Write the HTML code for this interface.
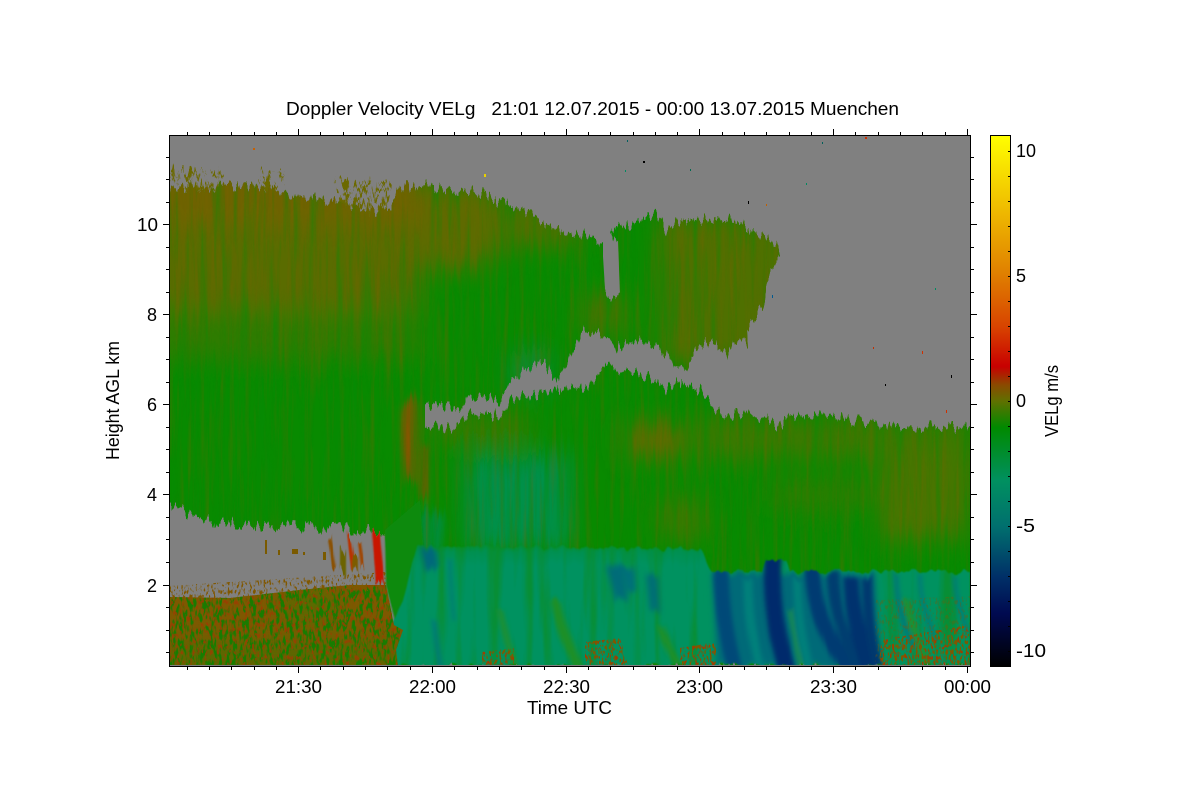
<!DOCTYPE html>
<html><head><meta charset="utf-8"><style>
html,body{margin:0;padding:0;background:#fff;width:1200px;height:800px;overflow:hidden}
svg{display:block}
text{font-family:"Liberation Sans",sans-serif;fill:#000}
</style></head><body>
<svg width="1200" height="800" viewBox="0 0 1200 800" xmlns="http://www.w3.org/2000/svg">
<defs>
<linearGradient id="cb" x1="0" y1="135" x2="0" y2="667" gradientUnits="userSpaceOnUse">
<stop offset="0" stop-color="#ffff00"/>
<stop offset=".13" stop-color="#f0c000"/>
<stop offset=".26" stop-color="#e08000"/>
<stop offset=".36" stop-color="#d84400"/>
<stop offset=".435" stop-color="#c80000"/>
<stop offset=".47" stop-color="#8a4a00"/>
<stop offset=".5" stop-color="#607000"/>
<stop offset=".55" stop-color="#008a00"/>
<stop offset=".65" stop-color="#009060"/>
<stop offset=".735" stop-color="#00706e"/>
<stop offset=".83" stop-color="#003068"/>
<stop offset=".9" stop-color="#000a50"/>
<stop offset="1" stop-color="#000000"/>
</linearGradient>
<linearGradient id="tealTop" x1="0" y1="540" x2="0" y2="566" gradientUnits="userSpaceOnUse">
<stop offset="0" stop-color="#0a8a10"/><stop offset=".45" stop-color="#009050"/><stop offset="1" stop-color="#009260"/>
</linearGradient>
<clipPath id="plot"><rect x="170" y="136" width="800" height="529"/></clipPath>
<clipPath id="cloud">
<polygon points="169,187 230,186 287,192 303,197 340,203 377,213 393,203 400,187 420,185 480,192 500,203 533,213 543,223 573,237 583,234 603,243 603,263 605,295 620,297 618,247 610,230 637,222 657,213 667,232 673,225 683,220 733,220 777,242 780,253 770,272 763,307 747,327 748,343 733,340 727,358 717,343 700,343 687,370 675,373 667,353 640,340 617,347 600,333 582,332 570,357 557,385 545,363 520,373 510,382 500,400 467,397 462,410 453,405 425,405 425,430 420,480 405,530 380,530 320,528 260,525 200,520 169,503"/>
<polygon points="425,427 453,427 467,415 507,415 510,400 553,390 590,387 600,367 640,372 667,390 677,383 700,390 717,413 767,417 778,427 797,413 850,420 900,426 970,428 970,666 395,666 400,640 388,585 385,530 420,470"/>
</clipPath>
<filter id="b12" x="-20%" y="-20%" width="140%" height="140%"><feGaussianBlur stdDeviation="12"/></filter>
<filter id="b5" x="-30%" y="-30%" width="160%" height="160%"><feGaussianBlur stdDeviation="4"/></filter>
<filter id="b3" x="-30%" y="-10%" width="160%" height="120%"><feGaussianBlur stdDeviation="3"/></filter>
<filter id="b2" x="-30%" y="-10%" width="160%" height="120%"><feGaussianBlur stdDeviation="2.2"/></filter>
<filter id="b1" x="-30%" y="-10%" width="160%" height="120%"><feGaussianBlur stdDeviation=".8"/></filter>
<filter id="disp" filterUnits="userSpaceOnUse" x="140" y="120" width="860" height="560" color-interpolation-filters="sRGB">
<feTurbulence type="fractalNoise" baseFrequency="0.28 0.018" numOctaves="3" seed="4" result="n"/>
<feColorMatrix in="n" type="matrix" values="0 0 0 0 .5  0 2 0 0 -.5  0 0 0 0 0  0 0 0 0 1" result="m"/>
<feDisplacementMap in="SourceGraphic" in2="m" scale="13" xChannelSelector="R" yChannelSelector="G"/>
</filter>
<filter id="tb" filterUnits="userSpaceOnUse" x="380" y="530" width="600" height="150" color-interpolation-filters="sRGB">
<feTurbulence type="fractalNoise" baseFrequency="0.12 0.02" numOctaves="2" seed="11" result="n"/>
<feColorMatrix in="n" type="matrix" values="0 0 0 0 .5  0 2 0 0 -.5  0 0 0 0 0  0 0 0 0 1" result="m"/>
<feDisplacementMap in="SourceGraphic" in2="m" scale="6" xChannelSelector="R" yChannelSelector="G" result="d"/>
<feGaussianBlur in="d" stdDeviation=".9"/>
</filter>
<filter id="streakBrown" filterUnits="userSpaceOnUse" x="169" y="135" width="801" height="531" color-interpolation-filters="sRGB">
<feTurbulence type="fractalNoise" baseFrequency="0.2 0.01" numOctaves="3" seed="9"/>
<feColorMatrix type="matrix" values="0 0 0 0 .5  0 0 0 0 .38  0 0 0 0 0  2.4 0 0 0 -1.1"/>
</filter>
<filter id="streakGreen" filterUnits="userSpaceOnUse" x="169" y="135" width="801" height="531" color-interpolation-filters="sRGB">
<feTurbulence type="fractalNoise" baseFrequency="0.14 0.008" numOctaves="3" seed="21"/>
<feColorMatrix type="matrix" values="0 0 0 0 .02  0 0 0 0 .55  0 0 0 0 .02  0 2.4 0 0 -1.1"/>
</filter>
<filter id="streakTeal" filterUnits="userSpaceOnUse" x="169" y="135" width="801" height="531" color-interpolation-filters="sRGB">
<feTurbulence type="fractalNoise" baseFrequency="0.09 0.006" numOctaves="3" seed="33"/>
<feColorMatrix type="matrix" values="0 0 0 0 .05  0 0 0 0 .55  0 0 0 0 .1  0 3 0 0 -1.45"/>
</filter>
<filter id="speck" filterUnits="userSpaceOnUse" x="169" y="540" width="801" height="126" color-interpolation-filters="sRGB">
<feTurbulence type="fractalNoise" baseFrequency="0.3 0.1" numOctaves="2" seed="7"/>
<feColorMatrix type="matrix" values="0 0 0 0 .06  0 0 0 0 .5  0 0 0 0 0  7 0 0 0 -3.3"/>
</filter>
<filter id="speckR2" filterUnits="userSpaceOnUse" x="169" y="540" width="801" height="126" color-interpolation-filters="sRGB">
<feTurbulence type="fractalNoise" baseFrequency="0.4 0.18" numOctaves="2" seed="27"/>
<feColorMatrix type="matrix" values="0 0 0 0 .62  0 0 0 0 .24  0 0 0 0 0  9 0 0 0 -5.2"/>
</filter>
<filter id="speckB" filterUnits="userSpaceOnUse" x="169" y="540" width="801" height="126" color-interpolation-filters="sRGB">
<feTurbulence type="fractalNoise" baseFrequency="0.5 0.2" numOctaves="2" seed="13"/>
<feColorMatrix type="matrix" values="0 0 0 0 .5  0 0 0 0 .34  0 0 0 0 0  9 0 0 0 -4.9"/>
</filter>
<filter id="speckO" filterUnits="userSpaceOnUse" x="169" y="160" width="300" height="60" color-interpolation-filters="sRGB">
<feTurbulence type="fractalNoise" baseFrequency="0.14 0.16" numOctaves="2" seed="3"/>
<feColorMatrix type="matrix" values="0 0 0 0 .42  0 0 0 0 .41  0 0 0 0 0  14 0 0 0 -7.2"/>
</filter>
<clipPath id="speckL"><polygon points="169,597 230,598 300,590 350,585 386,585 394,625 403,630 396,650 398,666 169,666"/></clipPath>
<clipPath id="sparseGray"><polygon points="169,586 260,580 387,572 387,590 300,594 230,602 169,600"/></clipPath>
<clipPath id="sparseTop"><polygon points="169,170 224,172 224,190 169,192"/><polygon points="258,172 285,174 285,192 258,192"/><polygon points="333,180 392,182 385,214 340,205"/></clipPath>
<clipPath id="speckR"><polygon points="880,640 970,625 970,666 880,666"/><polygon points="585,642 620,638 628,666 585,666"/><polygon points="680,648 716,642 716,666 680,666"/><polygon points="482,652 514,648 514,666 482,666"/></clipPath>
<clipPath id="speckG"><polygon points="875,600 970,596 970,666 875,666"/></clipPath>
<clipPath id="tealC"><polygon points="417,546 700,549 708,566 712,572 762,572 766,560 786,560 790,572 970,572 970,666 395,666 395,645 392,627 403,600"/></clipPath>
</defs>

<rect x="169" y="135" width="801" height="531" fill="#808080"/>

<g clip-path="url(#plot)">
<g filter="url(#disp)">
<rect x="169" y="160" width="300" height="60" filter="url(#speckO)" clip-path="url(#sparseTop)"/>
<g clip-path="url(#cloud)">
<rect x="169" y="135" width="801" height="531" fill="#088a00"/>
<g filter="url(#b12)">
<rect x="150" y="150" width="270" height="85" fill="#6e6400"/>
<rect x="150" y="225" width="270" height="85" fill="#5a6c00"/>
<rect x="150" y="310" width="270" height="50" fill="#2e7c00"/>
<rect x="420" y="185" width="70" height="85" fill="#5f6a00"/>
<rect x="490" y="200" width="90" height="50" fill="#4a7200"/>
<rect x="660" y="215" width="130" height="150" fill="#506f00"/>
<rect x="583" y="295" width="40" height="40" fill="#4a7200"/>
<rect x="430" y="418" width="100" height="22" fill="#3e7800"/>
<rect x="700" y="418" width="270" height="40" fill="#3e7800"/>
<rect x="880" y="450" width="90" height="90" fill="#4a7400"/>
<rect x="625" y="425" width="60" height="30" fill="#6c6800"/>
<rect x="660" y="500" width="45" height="40" fill="#3c7800"/>
<rect x="770" y="480" width="100" height="30" fill="#2a7e00"/>
<rect x="465" y="455" width="105" height="95" fill="#009048"/>
<rect x="510" y="350" width="40" height="40" fill="#0a8a30"/>
</g>
<g filter="url(#b5)">
<path d="M403 405 C400 440 403 470 408 482 L414 482 C418 450 416 425 417 395Z" fill="#8a5200"/>
<path d="M423 445 L428 445 L428 498 L421 498Z" fill="#865000"/>
<path d="M405 520 L425 505 L445 520 L440 560 L400 560Z" fill="#008c3a"/>
</g>
<rect x="169" y="135" width="801" height="531" filter="url(#streakBrown)" opacity=".32"/>
<rect x="169" y="135" width="801" height="531" filter="url(#streakGreen)" opacity=".5"/>
</g>
</g>

<!-- boundary layer -->
<polygon points="386,585 385,530 420,500 425,570 417,666 395,666 400,640" fill="#0a8a10" filter="url(#b1)"/>
<g filter="url(#tb)"><g clip-path="url(#tealC)">
<rect x="390" y="540" width="590" height="130" fill="url(#tealTop)"/>
<rect x="169" y="135" width="801" height="531" filter="url(#streakTeal)" opacity=".6"/>
<g filter="url(#b3)">
<polygon points="712,574 875,574 880,666 717,666" fill="#006a78"/>
<polygon points="606,566 622,566 628,600 616,600" fill="#006c78"/>
<polygon points="622,566 635,566 636,590 628,592" fill="#00707a"/>
<polygon points="646,574 658,574 660,612 650,612" fill="#006e74"/>
<polygon points="420,548 436,548 438,568 426,572" fill="#00687a"/>
</g>
<g filter="url(#b2)" stroke-linecap="butt" fill="none">
<path d="M721 570 C722 610 727 640 735 670" stroke="#004a78" stroke-width="15"/>
<path d="M748 580 C748 620 754 640 760 670" stroke="#00807a" stroke-width="9"/>
<path d="M773 555 C770 600 778 640 787 670" stroke="#002c6c" stroke-width="17"/>
<path d="M797 580 C798 620 803 645 810 670" stroke="#00807a" stroke-width="8"/>
<path d="M812 568 C814 610 828 640 850 670" stroke="#003a72" stroke-width="15"/>
<path d="M833 574 C833 610 846 640 860 670" stroke="#003e70" stroke-width="12"/>
<path d="M851 578 C852 610 859 640 870 670" stroke="#00306e" stroke-width="15"/>
<path d="M867 578 C867 610 871 640 878 670" stroke="#00386e" stroke-width="10"/>
<path d="M896 574 C896 605 905 630 915 650" stroke="#00787a" stroke-width="5"/>
<path d="M920 574 C920 600 928 620 935 640" stroke="#007c7a" stroke-width="4"/>
<path d="M955 574 C955 600 962 615 968 630" stroke="#007c7a" stroke-width="4"/>
<path d="M434 620 C436 640 438 655 441 670" stroke="#007a78" stroke-width="5"/>
<path d="M450 560 C450 580 452 600 454 620" stroke="#007a78" stroke-width="3"/>
<path d="M790 610 C793 630 797 650 802 670" stroke="#209a40" stroke-width="3"/>
<path d="M555 600 C560 625 570 650 580 670" stroke="#1a8f28" stroke-width="10"/>
<path d="M660 625 C665 640 672 655 680 670" stroke="#1a8f28" stroke-width="7"/>
<path d="M500 610 C503 630 510 650 516 670" stroke="#1a8f30" stroke-width="6"/>
<path d="M905 600 C910 620 920 650 930 670" stroke="#1a9030" stroke-width="8"/>
</g>
</g></g>

<!-- lower-left brown layer -->
<polygon points="169,597 230,598 300,590 350,585 386,585 394,625 403,630 396,650 398,666 169,666" fill="#7e5800"/>
<g clip-path="url(#speckL)">
<g filter="url(#b12)">
<rect x="285" y="592" width="50" height="26" fill="#4f7000"/>
<rect x="170" y="645" width="230" height="24" fill="#506c00"/>
</g>
<rect x="169" y="540" width="801" height="126" filter="url(#speck)" opacity=".9"/>
<rect x="169" y="540" width="801" height="126" filter="url(#speckR2)" opacity=".8"/>
</g>
<g clip-path="url(#sparseGray)"><rect x="169" y="540" width="801" height="126" filter="url(#speckB)"/></g>
<g clip-path="url(#speckG)"><rect x="169" y="540" width="801" height="126" filter="url(#speckB)" style="opacity:.35"/></g>
<g clip-path="url(#speckR)"><rect x="169" y="540" width="801" height="126" filter="url(#speckR2)"/><rect x="169" y="540" width="801" height="126" filter="url(#speckB)"/></g>

<!-- red streaks -->
<g filter="url(#disp)"><g filter="url(#b1)">
<path d="M372 530 L380 530 L384 584 L376 586Z" fill="#c81800"/>
<path d="M347 536 L351 536 L356 568 L351 570Z" fill="#b83000"/>
<path d="M358 540 L361 540 L364 570 L361 570Z" fill="#a04400"/>
<path d="M328 540 L331 540 L336 565 L332 565Z" fill="#8a5000"/>
<path d="M340 552 L346 552 L346 572 L340 570Z" fill="#6c6400"/>
<path d="M352 556 L358 556 L358 572 L352 572Z" fill="#7c5c00"/>
</g></g>
<g fill="#7a5a00">
<rect x="265" y="540" width="2" height="14"/><rect x="278" y="550" width="2" height="5"/><rect x="292" y="549" width="6" height="5"/><rect x="303" y="552" width="2" height="3"/><rect x="323" y="552" width="3" height="8"/>
</g>

<!-- specks in gray -->
<g>
<rect x="253" y="148" width="2" height="2" fill="#c86000"/><rect x="484" y="174" width="2" height="3" fill="#e8d000"/>
<rect x="627" y="140" width="1" height="2" fill="#006060"/><rect x="643" y="161" width="2" height="2" fill="#000"/>
<rect x="625" y="170" width="1" height="2" fill="#008a60"/><rect x="690" y="169" width="1" height="2" fill="#006a50"/>
<rect x="748" y="201" width="1" height="3" fill="#000"/><rect x="766" y="204" width="1" height="2" fill="#c06000"/>
<rect x="806" y="183" width="1" height="2" fill="#008a60"/><rect x="822" y="142" width="1" height="2" fill="#00605a"/>
<rect x="865" y="137" width="2" height="2" fill="#d03000"/><rect x="885" y="384" width="1" height="2" fill="#000"/>
<rect x="951" y="375" width="1" height="3" fill="#000"/><rect x="922" y="351" width="1" height="3" fill="#d03000"/>
<rect x="946" y="410" width="1" height="3" fill="#d03000"/><rect x="935" y="288" width="1" height="2" fill="#008a60"/>
<rect x="873" y="347" width="1" height="2" fill="#c03000"/><rect x="772" y="295" width="1" height="3" fill="#005a90"/>
</g>
</g>

<!-- frame -->
<rect x="169.5" y="135.5" width="801" height="531" fill="none" stroke="#000"/>
<path stroke="#000" fill="none" d="
M298.5 135V129M432.5 135V129M566.5 135V129M699.5 135V129M833.5 135V129M967.5 135V129
M298.5 667V673M432.5 667V673M566.5 667V673M699.5 667V673M833.5 667V673M967.5 667V673
M187.5 135V132M209.5 135V132M231.5 135V132M254.5 135V132M276.5 135V132M320.5 135V132M343.5 135V132M365.5 135V132M387.5 135V132M410.5 135V132M454.5 135V132M477.5 135V132M499.5 135V132M521.5 135V132M544.5 135V132M588.5 135V132M610.5 135V132M633.5 135V132M655.5 135V132M677.5 135V132M722.5 135V132M744.5 135V132M766.5 135V132M789.5 135V132M811.5 135V132M855.5 135V132M878.5 135V132M900.5 135V132M922.5 135V132M945.5 135V132
M187.5 667V670M209.5 667V670M231.5 667V670M254.5 667V670M276.5 667V670M320.5 667V670M343.5 667V670M365.5 667V670M387.5 667V670M410.5 667V670M454.5 667V670M477.5 667V670M499.5 667V670M521.5 667V670M544.5 667V670M588.5 667V670M610.5 667V670M633.5 667V670M655.5 667V670M677.5 667V670M722.5 667V670M744.5 667V670M766.5 667V670M789.5 667V670M811.5 667V670M855.5 667V670M878.5 667V670M900.5 667V670M922.5 667V670M945.5 667V670
M169 224.5H163M169 314.5H163M169 404.5H163M169 494.5H163M169 585.5H163
M971 224.5H977M971 314.5H977M971 404.5H977M971 494.5H977M971 585.5H977
M169 157.5H166M169 179.5H166M169 202.5H166M169 247.5H166M169 269.5H166M169 292.5H166M169 337.5H166M169 359.5H166M169 382.5H166M169 427.5H166M169 449.5H166M169 472.5H166M169 517.5H166M169 539.5H166M169 562.5H166M169 607.5H166M169 630.5H166M169 652.5H166
M971 157.5H974M971 179.5H974M971 202.5H974M971 247.5H974M971 269.5H974M971 292.5H974M971 337.5H974M971 359.5H974M971 382.5H974M971 427.5H974M971 449.5H974M971 472.5H974M971 517.5H974M971 539.5H974M971 562.5H974M971 607.5H974M971 630.5H974M971 652.5H974"/>

<!-- colorbar -->
<rect x="990.5" y="135.5" width="20" height="531" fill="url(#cb)" stroke="#000"/>
<path stroke="#000" fill="none" d="M1008 151.5H1010M1008 176.5H1010M1008 201.5H1010M1008 226.5H1010M1008 251.5H1010M1008 276.5H1010M1008 301.5H1010M1008 326.5H1010M1008 351.5H1010M1008 376.5H1010M1008 401.5H1010M1008 426.5H1010M1008 451.5H1010M1008 476.5H1010M1008 501.5H1010M1008 526.5H1010M1008 551.5H1010M1008 576.5H1010M1008 601.5H1010M1008 626.5H1010M1008 651.5H1010"/>

<!-- text -->
<text x="286" y="115" font-size="18" textLength="613" lengthAdjust="spacingAndGlyphs" xml:space="preserve">Doppler Velocity VELg   21:01 12.07.2015 - 00:00 13.07.2015 Muenchen</text>
<g font-size="18">
<text x="137" y="231" textLength="21" lengthAdjust="spacingAndGlyphs">10</text>
<text x="147" y="321">8</text>
<text x="147" y="411">6</text>
<text x="147" y="501">4</text>
<text x="147" y="592">2</text>
<text x="275" y="693" textLength="47" lengthAdjust="spacingAndGlyphs">21:30</text>
<text x="409" y="693" textLength="47" lengthAdjust="spacingAndGlyphs">22:00</text>
<text x="543" y="693" textLength="47" lengthAdjust="spacingAndGlyphs">22:30</text>
<text x="676" y="693" textLength="47" lengthAdjust="spacingAndGlyphs">23:00</text>
<text x="810" y="693" textLength="47" lengthAdjust="spacingAndGlyphs">23:30</text>
<text x="944" y="693" textLength="47" lengthAdjust="spacingAndGlyphs">00:00</text>
<text x="527" y="714" textLength="85" lengthAdjust="spacingAndGlyphs">Time UTC</text>
<text transform="translate(119,460) rotate(-90)" textLength="119" lengthAdjust="spacingAndGlyphs">Height AGL km</text>
<text x="1016" y="157" textLength="20" lengthAdjust="spacingAndGlyphs">10</text>
<text x="1016" y="282">5</text>
<text x="1016" y="407">0</text>
<text x="1016" y="532" textLength="19" lengthAdjust="spacingAndGlyphs">-5</text>
<text x="1016" y="657" textLength="30" lengthAdjust="spacingAndGlyphs">-10</text>
<text transform="translate(1058,437) rotate(-90)" textLength="72" lengthAdjust="spacingAndGlyphs">VELg m/s</text>
</g>
</svg>
</body></html>
